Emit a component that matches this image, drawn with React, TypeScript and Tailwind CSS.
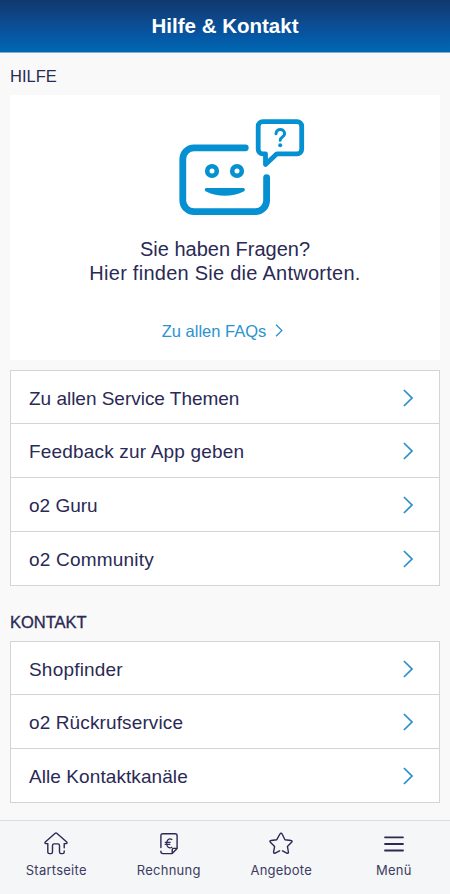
import type { ReactNode } from "react";

type Item = { label: string; tracking: string };

const helpItems: Item[] = [
  { label: "Zu allen Service Themen", tracking: "tracking-[-0.02px]" },
  { label: "Feedback zur App geben", tracking: "tracking-[0.18px]" },
  { label: "o2 Guru", tracking: "" },
  { label: "o2 Community", tracking: "tracking-[0.2px]" },
];

const contactItems: Item[] = [
  { label: "Shopfinder", tracking: "tracking-[0.2px]" },
  { label: "o2 Rückrufservice", tracking: "tracking-[0.12px]" },
  { label: "Alle Kontaktkanäle", tracking: "tracking-[0.08px]" },
];

function Chevron({ className }: { className: string }) {
  return (
    <svg viewBox="0 0 10 18" fill="none" className={className}>
      <path d="M0.9 1 9 9 0.9 17" stroke="#2a8fce" strokeWidth="1.7" />
    </svg>
  );
}

function BotIcon() {
  return (
    <svg
      width="126"
      height="98"
      viewBox="179 118 126 98"
      fill="none"
      stroke="#0590d2"
      strokeLinecap="round"
      strokeLinejoin="round"
      className="ml-[34px]"
    >
      {/* head */}
      <path
        d="M245.3 147.8H194a11.2 11.2 0 0 0-11.2 11.2v41.4A11.2 11.2 0 0 0 194 211.6h61.4a11.2 11.2 0 0 0 11.2-11.2V177.6"
        strokeWidth="6.8"
      />
      <circle cx="212" cy="171" r="4.8" strokeWidth="4.6" />
      <circle cx="237" cy="171" r="4.8" strokeWidth="4.6" />
      <path
        d="M206.3 188h37c1.9 0 2.1 2.8.3 3.5-12.2 5.8-25.4 5.8-37.6 0-1.8-.8-1.4-3.5.3-3.5Z"
        fill="#0590d2"
        stroke="none"
      />
      {/* speech bubble */}
      <path
        d="M262.8 121.6h34.3a4.6 4.6 0 0 1 4.6 4.6v23a4.6 4.6 0 0 1-4.6 4.6h-20.2l-11.4 10.6V153.8h-2.7a4.6 4.6 0 0 1-4.6-4.6v-23a4.6 4.6 0 0 1 4.6-4.6Z"
        strokeWidth="4.8"
      />
      <path
        d="M276 133.8c0-5.6 8.6-5.6 8.6 0 0 3.4-4.4 3-4.4 6.4"
        strokeWidth="3"
      />
      <circle cx="280.2" cy="145.3" r="2" fill="#0590d2" stroke="none" />
    </svg>
  );
}

function ListBox({ items }: { items: Item[] }) {
  return (
    <ul className="divide-y divide-[#d2d4d7] border border-[#d2d4d7] bg-white text-[#2a2a55]">
      {items.map((item) => (
        <li
          key={item.label}
          className="flex h-[54px] items-center justify-between pt-px pr-[26px] pl-[18px] first:h-[53px] last:h-[53px]"
        >
          <span className={`pt-[3px] text-[19px] ${item.tracking}`}>{item.label}</span>
          <Chevron className="h-[18px] w-[10px]" />
        </li>
      ))}
    </ul>
  );
}

function Tab({ label, children }: { label: string; children: ReactNode }) {
  return (
    <div className="flex flex-1 flex-col items-center">
      <svg
        width="26"
        height="24"
        viewBox="0 0 26 24"
        fill="none"
        stroke="#2c2a55"
        strokeWidth="1.4"
        strokeLinecap="round"
        strokeLinejoin="round"
      >
        {children}
      </svg>
      <span className="mt-[6px] font-[Inter,sans-serif] text-[13px] leading-[18px] tracking-[0.25px]">
        {label}
      </span>
    </div>
  );
}

export default function App() {
  return (
    <div className="flex h-[894px] w-[450px] flex-col bg-[#f9f9f9] font-['Liberation_Sans',Arial,sans-serif] text-[#2a2a55]">
      <header className="flex h-[53px] items-center justify-center border-b border-[#7faed0] bg-linear-to-b from-[#10386e] via-[#0755a2] via-65% to-[#0068b2]">
        <h1 className="text-[20.5px] font-bold text-white">Hilfe &amp; Kontakt</h1>
      </header>

      <main className="flex-1 px-[10px]">
        <h2 className="pt-[13px] text-[16.5px] leading-5">HILFE</h2>

        <section className="mt-[9px] flex h-[265px] flex-col items-center bg-white pt-[23px]">
          <BotIcon />
          <p className="mt-[21px] text-center text-[20px] leading-6">
            Sie haben Fragen?
            <br />
            <span className="tracking-[0.26px]">Hier finden Sie die Antworten.</span>
          </p>
          <a className="mt-[36px] mr-[5px] flex items-center gap-[9px] text-[16.5px] leading-5 text-[#2a93d0]">
            Zu allen FAQs
            <Chevron className="mb-px h-[13px] w-[8px]" />
          </a>
        </section>

        <div className="mt-[10px]">
          <ListBox items={helpItems} />
        </div>

        <h2 className="mt-[26px] mb-[9px] text-[16.5px] leading-5 [-webkit-text-stroke:0.35px_#2a2a55]">
          KONTAKT
        </h2>
        <ListBox items={contactItems} />
      </main>

      <nav className="flex h-[74px] border-t border-[#dcdde0] bg-[#f5f6f7] pt-[10px] text-[#3c3b62]">
        <Tab label="Startseite">
          <path d="M4.8 12.6H2.9c-1 0-1.3-.8-.6-1.5L12.2 2.3q.8-.7 1.6 0l9.9 8.8c.7.7.4 1.5-.6 1.5h-1.9v4.2M21.2 20v1q0 1.6-1.6 1.6h-1.5q-1.6 0-1.6-1.6v-6.5q0-1.6-1.6-1.6h-3.8q-1.6 0-1.6 1.6V21q0 1.6-1.6 1.6H6.4q-1.6 0-1.6-1.6v-8.4" />
        </Tab>
        <Tab label="Rechnung">
          <path d="M4.9 16.6V4.8q0-2 2-2h12.2q2 0 2 2v12.6l-4.9 5.2H6.9q-2 0-2-2v-.4M16.2 22.6v-3.8q0-1.4 1.4-1.4h3.5" />
          <path d="M15.9 8.5c-2.9-1.8-5.2.5-5.2 3.9s2.3 5.4 5.2 3.8M9.2 11.3h5M9.2 13.4h4.6" strokeWidth="1.2" />
        </Tab>
        <Tab label="Angebote">
          <path d="m11.6 19.8-4.4 2.3c-1 .5-1.8 0-1.6-1.1l1-5.6-4.2-4.1c-.8-.8-.5-1.7.6-1.8l5.8-.8L11.9 3c.5-1 1.7-1 2.2 0l2.9 5.7 6 .8c1.1.1 1.4 1 .6 1.8l-4.2 4.1 1 5.6c.2 1.1-.6 1.6-1.6 1.1l-4.3-2.3" />
        </Tab>
        <Tab label="Menü">
          <path d="M4 6.3h18M4 13h18M4 19.5h18" strokeWidth="1.8" />
        </Tab>
      </nav>
    </div>
  );
}
